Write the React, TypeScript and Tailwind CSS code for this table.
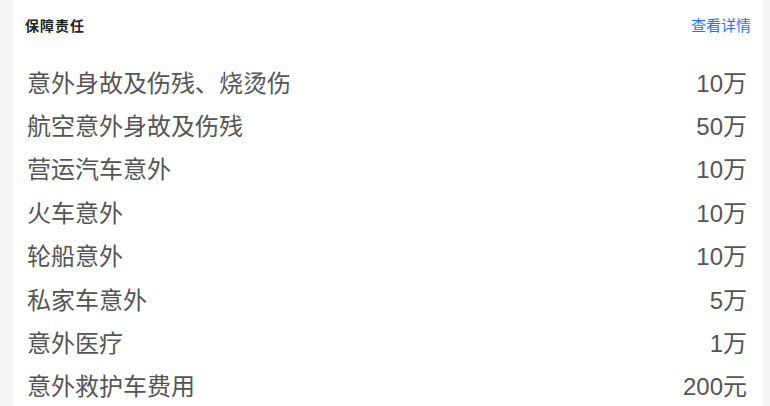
import React from "react";

const rows: [string, string][] = [
  ["意外身故及伤残、烧烫伤", "10万"],
  ["航空意外身故及伤残", "50万"],
  ["营运汽车意外", "10万"],
  ["火车意外", "10万"],
  ["轮船意外", "10万"],
  ["私家车意外", "5万"],
  ["意外医疗", "1万"],
  ["意外救护车费用", "200元"],
];

export default function App() {
  return (
    <div
      className="w-[770px] h-[406px] overflow-hidden bg-[#f5f5f5] flex"
      style={{ fontFamily: '"Liberation Sans", "Noto Sans CJK SC", sans-serif' }}
    >
      <div className="ml-[13px] w-[750px] h-full bg-white flex flex-col">
        <div className="h-[52px] flex items-center justify-between pl-[12px] pr-[12px] shrink-0">
          <span className="text-[14px] font-bold tracking-[1px] text-[#222] mt-[1px]">保障责任</span>
          <span className="text-[15px] text-[#1677ff]">查看详情</span>
        </div>
        <div className="pt-[10px] flex flex-col">
          {rows.map(([name, val]) => (
            <div
              key={name}
              className="h-[43.4px] shrink-0 flex items-center justify-between pl-[14px] pr-[16px] text-[24px] text-[#555]"
            >
              <span>{name}</span>
              <span>{val}</span>
            </div>
          ))}
        </div>
      </div>
    </div>
  );
}
